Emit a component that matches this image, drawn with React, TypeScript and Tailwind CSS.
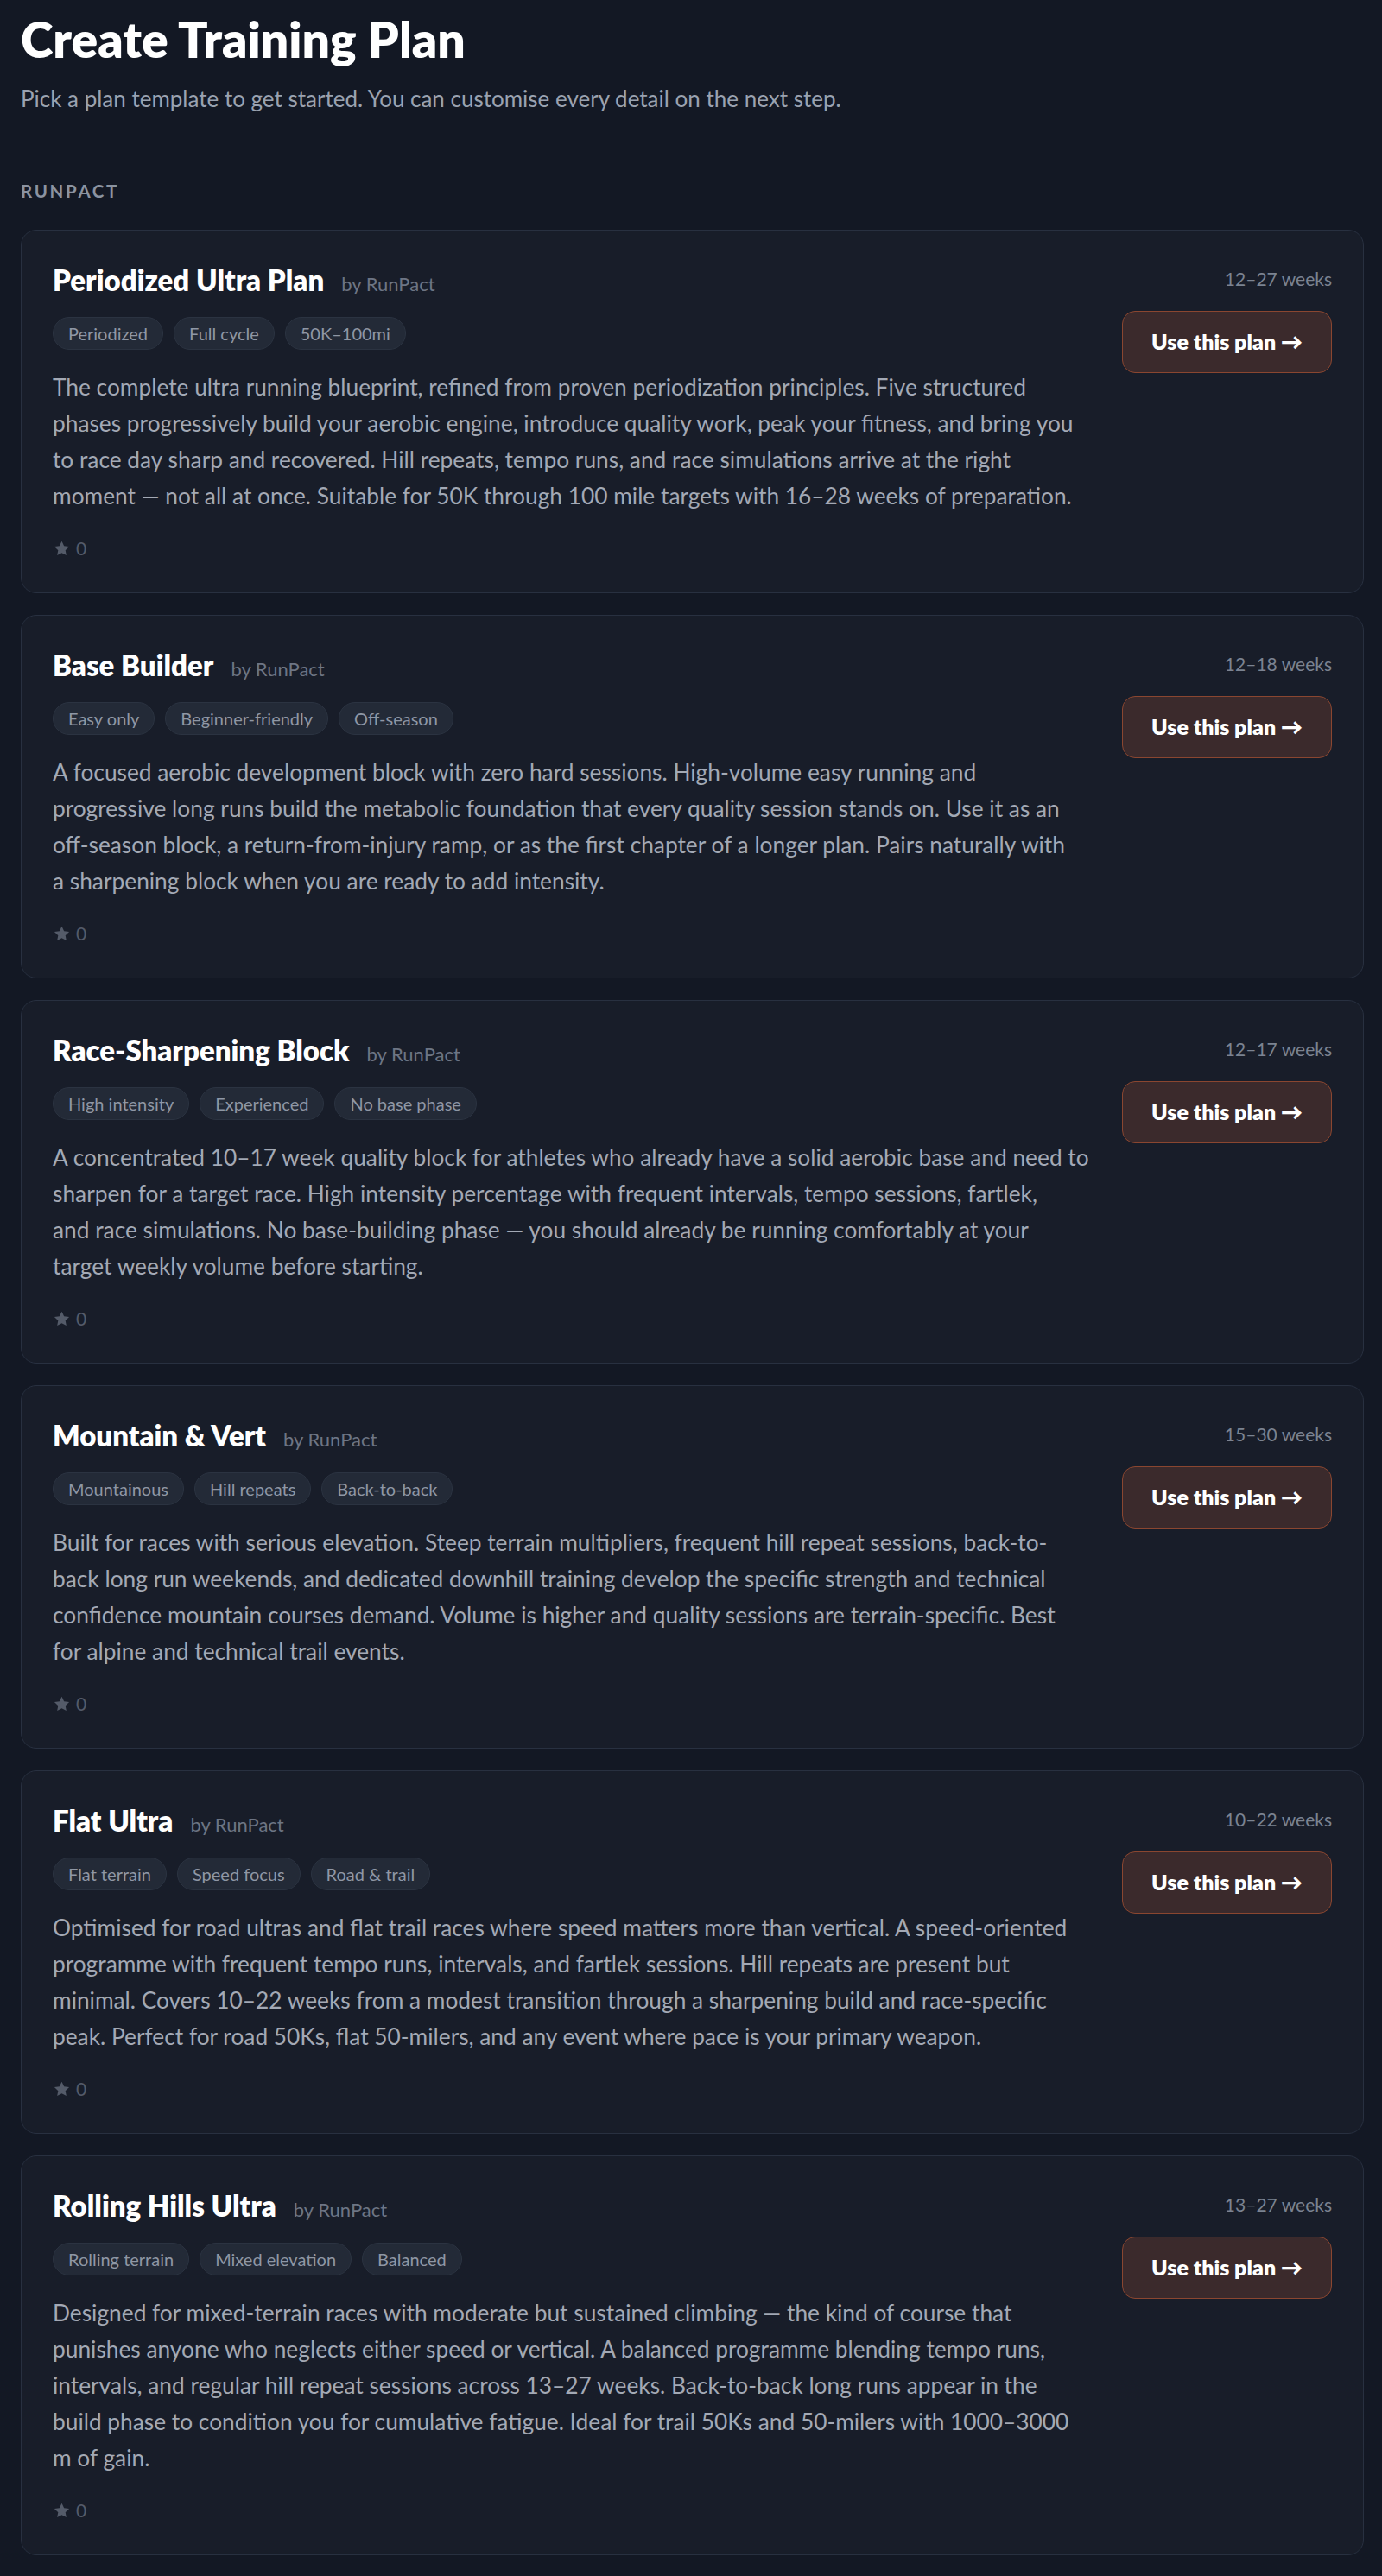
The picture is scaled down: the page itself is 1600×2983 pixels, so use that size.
import React from "react";

type Plan = {
  name: string;
  weeks: string;
  tags: string[];
  lines: string[];
};

// description lines are kept as in the original wrap
const plans: Plan[] = [
  {
    name: "Periodized Ultra Plan",
    weeks: "12–27 weeks",
    tags: ["Periodized", "Full cycle", "50K–100mi"],
    lines: [
      "The complete ultra running blueprint, refined from proven periodization principles. Five structured",
      "phases progressively build your aerobic engine, introduce quality work, peak your fitness, and bring you",
      "to race day sharp and recovered. Hill repeats, tempo runs, and race simulations arrive at the right",
      "moment — not all at once. Suitable for 50K through 100 mile targets with 16–28 weeks of preparation.",
    ],
  },
  {
    name: "Base Builder",
    weeks: "12–18 weeks",
    tags: ["Easy only", "Beginner-friendly", "Off-season"],
    lines: [
      "A focused aerobic development block with zero hard sessions. High-volume easy running and",
      "progressive long runs build the metabolic foundation that every quality session stands on. Use it as an",
      "off-season block, a return-from-injury ramp, or as the first chapter of a longer plan. Pairs naturally with",
      "a sharpening block when you are ready to add intensity.",
    ],
  },
  {
    name: "Race-Sharpening Block",
    weeks: "12–17 weeks",
    tags: ["High intensity", "Experienced", "No base phase"],
    lines: [
      "A concentrated 10–17 week quality block for athletes who already have a solid aerobic base and need to",
      "sharpen for a target race. High intensity percentage with frequent intervals, tempo sessions, fartlek,",
      "and race simulations. No base-building phase — you should already be running comfortably at your",
      "target weekly volume before starting.",
    ],
  },
  {
    name: "Mountain & Vert",
    weeks: "15–30 weeks",
    tags: ["Mountainous", "Hill repeats", "Back-to-back"],
    lines: [
      "Built for races with serious elevation. Steep terrain multipliers, frequent hill repeat sessions, back-to-",
      "back long run weekends, and dedicated downhill training develop the specific strength and technical",
      "confidence mountain courses demand. Volume is higher and quality sessions are terrain-specific. Best",
      "for alpine and technical trail events.",
    ],
  },
  {
    name: "Flat Ultra",
    weeks: "10–22 weeks",
    tags: ["Flat terrain", "Speed focus", "Road & trail"],
    lines: [
      "Optimised for road ultras and flat trail races where speed matters more than vertical. A speed-oriented",
      "programme with frequent tempo runs, intervals, and fartlek sessions. Hill repeats are present but",
      "minimal. Covers 10–22 weeks from a modest transition through a sharpening build and race-specific",
      "peak. Perfect for road 50Ks, flat 50-milers, and any event where pace is your primary weapon.",
    ],
  },
  {
    name: "Rolling Hills Ultra",
    weeks: "13–27 weeks",
    tags: ["Rolling terrain", "Mixed elevation", "Balanced"],
    lines: [
      "Designed for mixed-terrain races with moderate but sustained climbing — the kind of course that",
      "punishes anyone who neglects either speed or vertical. A balanced programme blending tempo runs,",
      "intervals, and regular hill repeat sessions across 13–27 weeks. Back-to-back long runs appear in the",
      "build phase to condition you for cumulative fatigue. Ideal for trail 50Ks and 50-milers with 1000–3000",
      "m of gain.",
    ],
  },
];

function Star() {
  return (
    <svg width="21" height="21" viewBox="0 0 24 24" fill="currentColor">
      <path d="M12 2l3 6.3 6.8.8-5 4.8 1.3 6.8L12 17.4l-6.1 3.3 1.3-6.8-5-4.8 6.8-.8z" />
    </svg>
  );
}

function PlanCard({ plan }: { plan: Plan }) {
  return (
    <div className="flex gap-12 rounded-[18px] border border-[#283040] bg-[#181d29] p-9">
      <div className="min-w-0 flex-1">
        <div className="flex items-baseline gap-[20px]">
          <h3 className="text-[33px] font-extrabold leading-[42px] text-white">{plan.name}</h3>
          <span className="text-[22px] text-[#6d7584]">by RunPact</span>
        </div>
        <div className="mt-[22px] flex gap-3">
          {plan.tags.map((tag) => (
            <span
              key={tag}
              className="flex h-[38px] items-center rounded-full border border-[#2b3341] bg-[#232a37] px-[17px] text-[20px] text-[#8f97a5]"
            >
              {tag}
            </span>
          ))}
        </div>
        <p className="mt-[22px] text-[26.3px] leading-[42px] text-[#a3a9b5]">
          {plan.lines.map((line, i) => (
            <span key={i} className="block whitespace-nowrap">
              {line}
            </span>
          ))}
        </p>
        <div className="mt-[25px] flex h-[30px] items-center gap-[6px] text-[#545b69]">
          <Star />
          <span className="text-[21px]">0</span>
        </div>
      </div>
      <div className="flex shrink-0 flex-col items-end">
        <div className="mt-[5px] text-[21px] leading-[30px] text-[#7b8391]">{plan.weeks}</div>
        <button className="mt-[22px] flex h-[72px] w-[243px] items-center justify-center rounded-[15px] border border-[#8a4630] bg-[#3b2a2c] text-[25px] font-extrabold text-white">
          Use this plan →
        </button>
      </div>
    </div>
  );
}

export default function App() {
  return (
    <div className="min-h-screen bg-[#131824] pb-6 pl-6 pr-[21px] pt-[15px] font-['Lato',sans-serif]">
      <h1 className="text-[57px] font-extrabold leading-[60px] text-white">Create Training Plan</h1>
      <p className="mt-[23px] text-[26px] leading-[32px] text-[#9aa2b0]">
        Pick a plan template to get started. You can customise every detail on the next step.
      </p>
      <h2 className="mt-[79px] text-[20.5px] font-bold uppercase leading-[24px] tracking-[0.13em] text-[#8b93a1]">
        RunPact
      </h2>
      <div className="mt-[33px] flex flex-col gap-[25px]">
        {plans.map((plan) => (
          <PlanCard key={plan.name} plan={plan} />
        ))}
      </div>
    </div>
  );
}
